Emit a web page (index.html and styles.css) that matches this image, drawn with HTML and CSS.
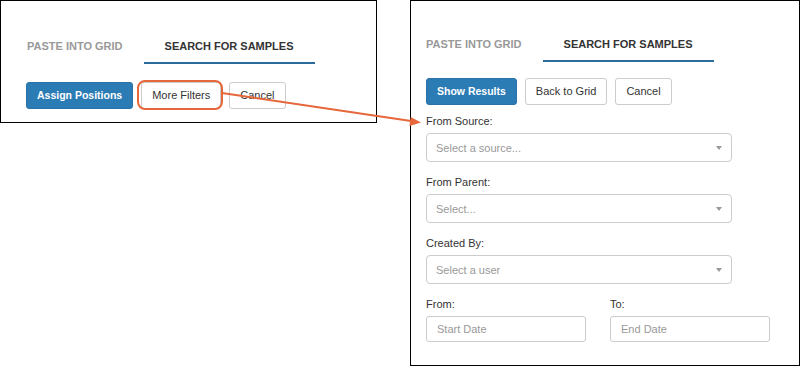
FILE: index.html
```html
<!DOCTYPE html>
<html>
<head>
<meta charset="utf-8">
<link rel="stylesheet" href="styles.css">
</head>
<body>
<div class="canvas">
  <div class="panel panel-left">
    <div class="tabs">
      <div class="tab">PASTE INTO GRID</div>
      <div class="tab active">SEARCH FOR SAMPLES</div>
    </div>
    <div class="btn-row left-btns">
      <button class="btn primary">Assign Positions</button>
      <button class="btn">More Filters</button>
      <button class="btn">Cancel</button>
    </div>
  </div>

  <div class="panel panel-right">
    <div class="tabs">
      <div class="tab">PASTE INTO GRID</div>
      <div class="tab active">SEARCH FOR SAMPLES</div>
    </div>
    <div class="btn-row right-btns">
      <button class="btn primary">Show Results</button>
      <button class="btn">Back to Grid</button>
      <button class="btn">Cancel</button>
    </div>
    <div class="form">
      <div class="field">
        <div class="label">From Source:</div>
        <div class="select"><span class="ph">Select a source...</span><span class="caret"></span></div>
      </div>
      <div class="field">
        <div class="label">From Parent:</div>
        <div class="select"><span class="ph">Select...</span><span class="caret"></span></div>
      </div>
      <div class="field">
        <div class="label">Created By:</div>
        <div class="select"><span class="ph">Select a user</span><span class="caret"></span></div>
      </div>
      <div class="date-row">
        <div class="date-field">
          <div class="label">From:</div>
          <div class="input"><span class="ph">Start Date</span></div>
        </div>
        <div class="date-field">
          <div class="label">To:</div>
          <div class="input"><span class="ph">End Date</span></div>
        </div>
      </div>
    </div>
  </div>

  <svg class="overlay" width="800" height="366" viewBox="0 0 800 366">
    <rect x="138" y="81" width="84" height="28" rx="7" ry="7" fill="none" stroke="#e5673a" stroke-width="2"/>
    <line x1="222" y1="93" x2="411" y2="121" stroke="#e5673a" stroke-width="2"/>
    <polygon points="421,122.5 410.7,117.1 409.5,126" fill="#e5673a"/>
  </svg>
</div>
</body>
</html>
```

FILE: styles.css
```css
* { box-sizing: border-box; }

html, body {
  margin: 0;
  padding: 0;
  background: #fff;
}

body {
  font-family: "Liberation Sans", Arial, sans-serif;
  color: #333;
}

.canvas {
  position: relative;
  width: 800px;
  height: 366px;
  display: flex;
  align-items: flex-start;
  gap: 33px;
}

.panel {
  border: 1px solid #000;
  background: #fff;
}

.panel-left {
  width: 377px;
  height: 123px;
  padding: 38px 0 0 25px;
}

.panel-right {
  width: 390px;
  height: 366px;
  padding: 36px 0 0 15px;
}

.tabs {
  display: flex;
  margin-left: -21px;
}

.panel-left .tabs {
  margin-left: -20px;
}

.tab {
  font-size: 11px;
  font-weight: bold;
  line-height: 15px;
  color: #999;
  padding: 0 21px 8px;
  border-bottom: 2px solid transparent;
  white-space: nowrap;
}

.tab.active {
  color: #333;
  border-bottom-color: #2b6c9c;
}

.btn-row {
  display: flex;
  gap: 8px;
}

.left-btns { margin-top: 18px; }
.right-btns { margin-top: 16px; }

.btn {
  font-family: "Liberation Sans", Arial, sans-serif;
  font-size: 11px;
  line-height: 15px;
  height: 27px;
  padding: 5px 10px;
  border: 1px solid #ccc;
  border-radius: 3px;
  background: #fff;
  color: #333;
  white-space: nowrap;
}

.btn.primary {
  font-size: 10.5px;
  font-weight: bold;
  color: #fff;
  background: #2b7bb5;
  border-color: #2a72a8;
}

.form {
  margin-top: 8px;
}

.field {
  width: 306px;
  margin-bottom: 12px;
}

.label {
  font-size: 11px;
  line-height: 17px;
  color: #333;
  margin-bottom: 3px;
}

.select {
  height: 29px;
  border: 1px solid #ccc;
  border-radius: 4px;
  display: flex;
  align-items: center;
  justify-content: space-between;
  padding: 0 9px 0 9px;
}

.ph {
  font-size: 11px;
  color: #999;
}

.caret {
  width: 0;
  height: 0;
  border-left: 3.5px solid transparent;
  border-right: 3.5px solid transparent;
  border-top: 4px solid #999;
}

.date-row {
  display: grid;
  grid-template-columns: 160px 160px;
  column-gap: 24px;
}

.input {
  height: 26px;
  border: 1px solid #ccc;
  border-radius: 3px;
  display: flex;
  align-items: center;
  padding: 0 10px;
}

.overlay {
  position: absolute;
  left: 0;
  top: 0;
  pointer-events: none;
}
```
